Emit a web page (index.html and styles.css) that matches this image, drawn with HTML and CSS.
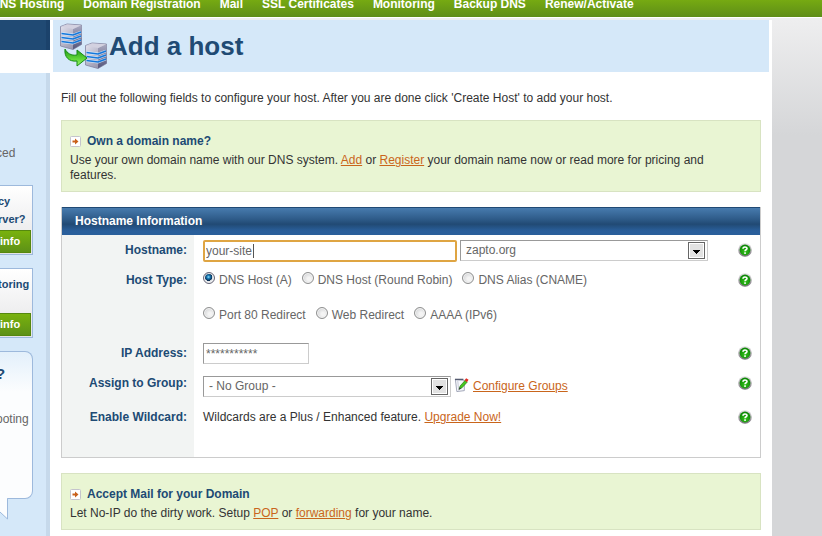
FILE: index.html
```html
<!DOCTYPE html>
<html lang="en">
<head>
<meta charset="utf-8">
<title>Add a host</title>
<link rel="stylesheet" href="styles.css">
</head>
<body>
<svg class="defs" aria-hidden="true">
  <defs>
    <linearGradient id="metal" x1="0" y1="0" x2="0.8" y2="1"><stop offset="0" stop-color="#e6e5f0"/><stop offset="1" stop-color="#8d8ca6"/></linearGradient>
    <linearGradient id="side" x1="0" y1="0" x2="0" y2="1"><stop offset="0" stop-color="#a9a9c0"/><stop offset="1" stop-color="#55567c"/></linearGradient>
    <linearGradient id="leaf" x1="0" y1="0" x2="0" y2="1"><stop offset="0" stop-color="#1f9812"/><stop offset="0.6" stop-color="#63d83a"/><stop offset="1" stop-color="#9af56a"/></linearGradient>
    <radialGradient id="ball" cx="0.5" cy="0.65" r="0.6"><stop offset="0" stop-color="#35c21c"/><stop offset="1" stop-color="#0b8604"/></radialGradient>
    <linearGradient id="ring" x1="0" y1="0" x2="0" y2="1"><stop offset="0" stop-color="#e2e2e2"/><stop offset="1" stop-color="#77717a"/></linearGradient>
    <symbol id="server" viewBox="0 0 24 28">
      <path d="M1.500 3.500 8 1 22.500 2V21.500L14 26.500 1.500 23Z" fill="url(#metal)" stroke="#8283a0" stroke-width="0.800" stroke-linejoin="round"/>
      <path d="M14 6 22.500 2.300V21.300L14 26.200Z" fill="url(#side)"/>
      <path d="M2 3.600 8.200 1.400 22 2.300 14 6Z" fill="#d3d1e0"/>
      <path d="M2.500 10.500 14 12 22 9M2.500 14.500 14 16 22 13M2.500 18.500 14 20 22 17" fill="none" stroke="#d6ebff" stroke-width="2.800" opacity="0.800"/>
      <path d="M2.500 10.500 14 12 22 9M2.500 14.500 14 16 22 13M2.500 18.500 14 20 22 17" fill="none" stroke="#1478dc" stroke-width="1.700"/>
    </symbol>
    <symbol id="help" viewBox="0 0 14 14">
      <circle cx="7" cy="7" r="6.800" fill="url(#ring)"/>
      <circle cx="7" cy="7" r="5.400" fill="url(#ball)"/>
      <path d="M5 5.700C5 3.500 9 3.400 9 5.500 9 6.800 7 6.700 7 8.300" fill="none" stroke="#fff" stroke-width="1.600"/>
      <rect x="6.200" y="9.300" width="1.700" height="1.600" fill="#fff"/>
    </symbol>
    <symbol id="arrow" viewBox="0 0 11 11">
      <rect x="0.500" y="0.500" width="10" height="10" rx="1" fill="#fff" stroke="#c4c4cc"/>
      <path d="M2.500 4.500H5V2.500L8.500 5.500 5 8.500V6.500H2.500Z" fill="#c9601a"/>
    </symbol>
    <symbol id="drop" viewBox="0 0 17 17">
      <rect x="0.500" y="0.500" width="16" height="16" fill="#fff" stroke="#666"/>
      <rect x="2" y="2" width="13" height="13" fill="#e2e2e2"/>
      <path d="M5 8H12V9H11V10H10V11H9V12H8V11H7V10H6V9H5Z" fill="#000"/>
    </symbol>
  </defs>
</svg>

<nav class="topnav">
  <a href="#">DNS Hosting</a>
  <a href="#">Domain Registration</a>
  <a href="#">Mail</a>
  <a href="#">SSL Certificates</a>
  <a href="#">Monitoring</a>
  <a href="#">Backup DNS</a>
  <a href="#">Renew/Activate</a>
</nav>

<div class="page">
  <aside class="sidebar">
    <div class="side-title"></div>
    <div class="side-body">
      <p class="side-text">ced</p>
      <div class="promo"><p>cy<br>rver?</p><a href="#">info</a></div>
      <div class="promo"><p>toring</p><a href="#">info</a></div>
      <div class="bubble">
        <h2>?</h2>
        <p>ooting</p>
        <svg class="tail" viewBox="0 0 14 22" aria-hidden="true"><path d="M0 0H7.500V21L0 14Z" fill="#fcfdfe"/><path d="M14 0.500H7.500V21L0 14" fill="none" stroke="#9db9dc"/></svg>
      </div>
    </div>
  </aside>

  <main class="main">
    <header class="heading">
      <svg class="logo" viewBox="0 0 50 48" aria-hidden="true">
        <use href="#server" x="0" y="0" width="24" height="28"/>
        <use href="#server" x="25" y="19" width="24" height="28"/>
        <path d="M6 26C8 30 12 33 18 32V27L28 35 18 43V38C10 39 5 34 6 26Z" fill="url(#leaf)" stroke="#168b13"/>
      </svg>
      <h1>Add a host</h1>
    </header>

    <div class="content">
      <p class="intro">Fill out the following fields to configure your host. After you are done click 'Create Host' to add your host.</p>

      <section class="note">
        <h2><svg viewBox="0 0 11 11" aria-hidden="true"><use href="#arrow"/></svg>Own a domain name?</h2>
        <p>Use your own domain name with our DNS system. <a href="#">Add</a> or <a href="#">Register</a> your domain name now or read more for pricing and features.</p>
      </section>

      <form class="panel">
        <h2 class="panel-title">Hostname Information</h2>

        <div class="row">
          <label class="name" for="host">Hostname:</label>
          <div class="field">
            <span class="host"><input id="host" type="text" value="your-site"><i class="caret"></i></span>
            <span class="pick"><select aria-label="Domain"><option>zapto.org</option></select><svg viewBox="0 0 17 17" aria-hidden="true"><use href="#drop"/></svg></span>
          </div>
          <button class="help" type="button" aria-label="Help"><svg viewBox="0 0 14 14"><use href="#help"/></svg></button>
        </div>

        <div class="row types">
          <span class="name" id="type">Host Type:</span>
          <div class="radios" role="radiogroup" aria-labelledby="type">
            <div class="line">
              <label><input type="radio" name="type" checked>DNS Host (A)</label>
              <label><input type="radio" name="type">DNS Host (Round Robin)</label>
              <label><input type="radio" name="type">DNS Alias (CNAME)</label>
            </div>
            <div class="line">
              <label><input type="radio" name="type">Port 80 Redirect</label>
              <label><input type="radio" name="type">Web Redirect</label>
              <label><input type="radio" name="type">AAAA (IPv6)</label>
            </div>
          </div>
          <button class="help" type="button" aria-label="Help"><svg viewBox="0 0 14 14"><use href="#help"/></svg></button>
        </div>

        <div class="row">
          <label class="name" for="ip">IP Address:</label>
          <div class="field"><input class="ip" id="ip" type="text" value="***********"></div>
          <button class="help" type="button" aria-label="Help"><svg viewBox="0 0 14 14"><use href="#help"/></svg></button>
        </div>

        <div class="row group">
          <label class="name" for="group">Assign to Group:</label>
          <div class="field">
            <span class="pick"><select id="group"><option>- No Group -</option></select><svg viewBox="0 0 17 17" aria-hidden="true"><use href="#drop"/></svg></span>
            <svg class="edit" viewBox="0 0 16 16" aria-hidden="true">
              <path d="M1.500 2.500 11 3V14L3 15Z" fill="#f6f7fb" stroke="#8a8fa5" stroke-width="0.800"/>
              <path d="M4 3.500 5 14" stroke="#c3c7d4"/>
              <path d="M1 2H10" stroke="#555b70" stroke-width="1.400"/>
              <path d="M5.500 12.500 6.500 9 12 3 14 5 8.500 11Z" fill="#46c51e" stroke="#207911" stroke-width="0.700"/>
              <path d="M11.200 3 13 0.800 15.500 2.500 13.800 5Z" fill="#e22c22"/>
              <path d="M5 13 6 10.500 7.500 12Z" fill="#333"/>
            </svg>
            <a href="#">Configure Groups</a>
          </div>
          <button class="help" type="button" aria-label="Help"><svg viewBox="0 0 14 14"><use href="#help"/></svg></button>
        </div>

        <div class="row last">
          <span class="name">Enable Wildcard:</span>
          <p class="plain">Wildcards are a Plus / Enhanced feature. <a href="#">Upgrade Now!</a></p>
          <button class="help" type="button" aria-label="Help"><svg viewBox="0 0 14 14"><use href="#help"/></svg></button>
        </div>
      </form>

      <section class="note">
        <h2><svg viewBox="0 0 11 11" aria-hidden="true"><use href="#arrow"/></svg>Accept Mail for your Domain</h2>
        <p>Let No-IP do the dirty work. Setup <a href="#">POP</a> or <a href="#">forwarding</a> for your name.</p>
      </section>
    </div>
  </main>
</div>
</body>
</html>
```
FILE: styles.css
```css
* { box-sizing: border-box; }
html { height: 100%; overflow: hidden; }
body {
  margin: 0;
  min-height: 100%;
  display: flex;
  flex-direction: column;
  font: 12px/15px "Liberation Sans", Arial, sans-serif;
  color: #333;
  background: linear-gradient(#eeeeef 20px, #d5d6d8 135px);
}
h1, h2, p { margin: 0; }
h2 { font-size: 12px; line-height: 15px; }
.defs { position: absolute; width: 0; height: 0; }

.topnav {
  display: flex;
  gap: 19px;
  height: 18px;
  padding-bottom: 5px;
  margin-bottom: 2px;
  align-items: flex-end;
  background: linear-gradient(#76aa12, #5e8d18);
  border-bottom: 1px solid #fff;
  white-space: nowrap;
}
.topnav a { color: #fff; font-weight: bold; text-decoration: none; }
.topnav a:first-child { margin-left: -9px; }

.page { flex: 1; display: flex; }
.sidebar {
  flex: 0 0 50px;
  display: flex;
  flex-direction: column;
  overflow: hidden;
  background: #fff;
}
.side-title { height: 30px; background: #204a74; border-right: 4px solid #1b426b; }
.side-body {
  flex: 1;
  margin-top: 23px;
  padding-top: 73px;
  background: #d5e8f9;
  border-right: 4px solid #c6d9eb;
}
.side-text { color: #666; margin: 0 0 24px -4px; }
.promo {
  display: flex;
  flex-direction: column;
  justify-content: space-between;
  width: 33px;
  height: 70px;
  margin-bottom: 13px;
  padding: 6px 1px 1px 0;
  border: 1px solid #9db9dc;
  border-left: 0;
  background: linear-gradient(#fff, #e4e4e6);
}
.promo p { color: #204a74; font-size: 11px; font-weight: bold; line-height: 18px; margin-left: -2px; }
.promo a {
  height: 23px;
  padding-top: 3px;
  color: #fff;
  font-size: 11px;
  font-weight: bold;
  text-decoration: none;
  background: linear-gradient(#79b20e, #5d9117);
  border: 1px solid #55880f;
  border-left: 0;
}
.bubble {
  position: relative;
  width: 33px;
  height: 148px;
  padding-top: 12px;
  border: 1px solid #9db9dc;
  border-left: 0;
  border-radius: 0 8px 8px 0;
  background: linear-gradient(#e3f0fb, #fcfdfe 40px);
}
.bubble h2 { color: #204a74; font-size: 15px; line-height: 20px; margin: 0 0 28px -4px; }
.bubble p { color: #666; margin-left: -4px; }
.tail { position: absolute; left: 0; top: 146px; width: 14px; height: 22px; }

.main { flex: 0 1 722px; min-width: 0; padding: 0 3px; background: #fff; }
.heading { display: flex; height: 52px; background: #d5e8f9; }
.logo { flex: none; width: 50px; height: 48px; margin: 3px 0 0 6px; }
h1 { color: #204a74; font-size: 26px; line-height: 52px; }

.content { padding: 0 8px; }
.intro { margin: 19px 0 14px; }
a { color: #c9651b; }
.note { padding: 13px 8px 8px; background: #e9f5d3; border: 1px solid #d8e3c2; }
.note h2 { display: flex; align-items: center; color: #204a74; margin-bottom: 4px; }
.note h2 svg { width: 11px; height: 11px; margin-right: 6px; }

.panel { margin: 15px 0; border: 1px solid #ccc; border-top: 0; }
.panel-title {
  padding: 6px 13px;
  color: #fff;
  border-top: 1px solid #204a74;
  background: linear-gradient(#477bae, #2f5c8a 40%, #214a74 60%, #2a5f9b 85%, #2a5f9b);
}
.row { display: grid; grid-template-columns: 132px 1fr 22px; min-height: 30px; }
.types { min-height: 73px; }
.group { min-height: 34px; }
.last { min-height: 55px; }
.name {
  padding: 8px 7px 0 0;
  color: #204a74;
  font-weight: bold;
  text-align: right;
  background: #f2f4f3;
}
.field { display: flex; align-items: flex-start; gap: 3px; padding: 5px 0 0 9px; }
.group .field { padding-top: 8px; }
.field > a { margin: 3px 0 0 1px; }
.plain { padding: 8px 0 0 9px; }
.host { position: relative; width: 254px; }
input[type="text"], select {
  display: block;
  width: 100%;
  height: 21px;
  margin: 0;
  padding: 0 2px;
  border: 1px solid #ccc;
  border-top-color: #999;
  border-left-color: #999;
  border-radius: 0;
  background: #fff;
  color: #666;
  font: inherit;
}
.host input[type="text"] { height: 22px; padding: 0 1px; border: 2px solid #dfa543; border-radius: 2px; }
.caret { position: absolute; left: 50px; top: 4px; width: 1px; height: 14px; background: #555; }
.field .ip { width: 106px; }
.pick { position: relative; width: 248px; }
.pick select { appearance: none; padding: 0 20px 0 5px; }
.pick svg { position: absolute; right: 3px; top: 2px; width: 17px; height: 17px; pointer-events: none; }
.edit { width: 15px; height: 16px; margin-top: 1px; }

.radios { padding: 6px 0 0 9px; }
.line { display: flex; gap: 10px; }
.line + .line { margin-top: 17px; }
.line label { display: flex; gap: 4px; color: #666; line-height: 18px; }
.line input {
  appearance: none;
  flex: none;
  width: 12px;
  height: 12px;
  margin: 1px 0 0;
  border: 1px solid #8e8f8f;
  border-radius: 50%;
  background: radial-gradient(circle at 60% 60%, #f4f4f4 20%, #c4c6c9);
  box-shadow: inset 0 0 0 1px #f4f4f4;
}
.line input:checked {
  border-color: #667;
  background: radial-gradient(circle at 45% 40%, #8fe2ff 0, #1879b4 20%, #092c50 45%, #e3e6ea 50%);
}
.help { align-self: start; width: 14px; height: 14px; margin-top: 8px; padding: 0; border: 0; background: none; }
.help svg { display: block; width: 14px; height: 14px; }
```
